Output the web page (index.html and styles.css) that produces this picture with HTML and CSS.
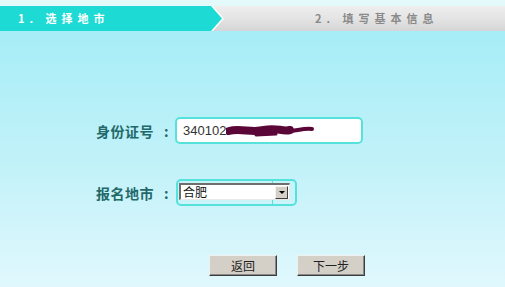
FILE: index.html
```html
<!DOCTYPE html>
<html lang="zh-CN">
<head>
    <meta charset="UTF-8">
    <title>报名 - 选择地市</title>
    <link rel="stylesheet" href="styles.css">
</head>
<body>
    <div class="tabs">
        <div class="tab-edge">
            <div class="tab-active">1. 选择地市</div>
        </div>
        <div class="tab-next">2. 填写基本信息</div>
    </div>

    <form class="form">
        <div class="row">
            <label class="label">身份证号<span class="colon">:</span></label>
            <div class="id-box">
                <span class="id-text">340102</span>
                <svg class="scribble" width="88" height="14" viewBox="0 0 88 14">
                    <path d="M3 7 C 14 4, 26 9, 38 6 S 56 8, 64 6" stroke="#5a0636" stroke-width="8" fill="none" stroke-linecap="round"/>
                    <path d="M60 7 C 68 8, 76 4, 86 5" stroke="#5a0636" stroke-width="4" fill="none" stroke-linecap="round"/>
                    <path d="M30 11 L 50 10" stroke="#5a0636" stroke-width="3" fill="none" stroke-linecap="round"/>
                </svg>
            </div>
        </div>
        <div class="row row-city">
            <label class="label">报名地市<span class="colon">:</span></label>
            <div class="select-box">
                <div class="select">
                    <span class="select-text">合肥</span>
                    <span class="drop"><span class="arrow"></span></span>
                </div>
            </div>
        </div>
        <div class="actions">
            <button type="button" class="btn">返回</button>
            <button type="button" class="btn">下一步</button>
        </div>
    </form>
</body>
</html>
```

FILE: styles.css
```css
body{
    margin: 0;
    height: 287px;
    background: linear-gradient(#a0ecf6, #c4f2f9 60%, #e0f8fd);
    font-family: "Noto Sans CJK SC", sans-serif;
    overflow: hidden;
}

/* step bar */
.tabs{
    display: flex;
    height: 25px;
    border-top: 6px solid #e4f9f9;
    background: linear-gradient(#eeeeee, #e4e4e4 50%, #d5d5d5);
}
.tab-edge{
    width: 224px;
    background-color: #ffffff;
    clip-path: polygon(0 0, 213px 0, 224px 12.5px, 213px 25px, 0 25px);
}
.tab-active{
    width: 222px;
    height: 25px;
    background-color: #1ddbd4;
    clip-path: polygon(0 0, 211px 0, 222px 12.5px, 211px 25px, 0 25px);
    color: #ffffff;
    font-size: 11px;
    font-weight: bold;
    letter-spacing: 5px;
    line-height: 25px;
    padding-left: 18px;
    box-sizing: border-box;
}
.tab-next{
    flex: 1;
    color: #8a8a8a;
    font-size: 11px;
    font-weight: bold;
    letter-spacing: 5px;
    line-height: 25px;
    padding-left: 91px;
}

/* form */
.form{
    padding: 86px 0 0 96px;
}
.row{
    display: flex;
    align-items: center;
}
.row-city{
    margin-top: 35px;
}
.label{
    width: 79px;
    color: #22696a;
    font-size: 14px;
    font-weight: bold;
    letter-spacing: 0.5px;
}
.colon{
    margin-left: 10px;
}
.id-box{
    width: 184px;
    height: 23px;
    border: 2px solid #55e2dd;
    border-radius: 5px;
    background-color: #ffffff;
    display: flex;
    align-items: center;
    padding-left: 6px;
    box-sizing: content-box;
    width: 178px;
}
.id-text{
    font-family: "Liberation Sans", Arial, sans-serif;
    font-size: 13px;
    color: #333333;
}
.scribble{
    margin-left: 0;
}

.select-box{
    margin-left: 1px;
    border: 2px solid #55e2dd;
    border-radius: 5px;
    padding: 2px 5px 4px 1px;
    background: linear-gradient(90deg, transparent 94px, #55e2dd 94px, #55e2dd 95px, transparent 95px);
}
.select{
    width: 105px;
    height: 14px;
    display: flex;
    align-items: center;
    justify-content: space-between;
    background-color: #ffffff;
    border-top: 2px solid #6e6e6e;
    border-left: 2px solid #6e6e6e;
    border-right: 1px solid #e8e8e8;
    border-bottom: 1px solid #e8e8e8;
    padding: 0 1px 0 2px;
    box-sizing: content-box;
}
.select-text{
    font-size: 12px;
    color: #111111;
    line-height: 14px;
}
.drop{
    width: 11px;
    height: 11px;
    background-color: #d4d0c8;
    border: 1px solid;
    border-color: #f4f4f4 #404040 #404040 #f4f4f4;
    display: flex;
    align-items: center;
    justify-content: center;
}
.arrow{
    width: 0;
    height: 0;
    border-left: 3px solid transparent;
    border-right: 3px solid transparent;
    border-top: 3px solid #000000;
}

.actions{
    display: flex;
    gap: 20px;
    margin: 49px 0 0 113px;
}
.btn{
    width: 68px;
    height: 21px;
    padding: 0;
    background-color: #d4d0c8;
    border: 1px solid;
    border-color: #f0f0f0 #3c3c3c #3c3c3c #f0f0f0;
    box-shadow: inset -1px -1px #8a8a8a;
    font-family: "Noto Sans CJK SC", sans-serif;
    font-size: 12px;
    color: #222222;
}
```
